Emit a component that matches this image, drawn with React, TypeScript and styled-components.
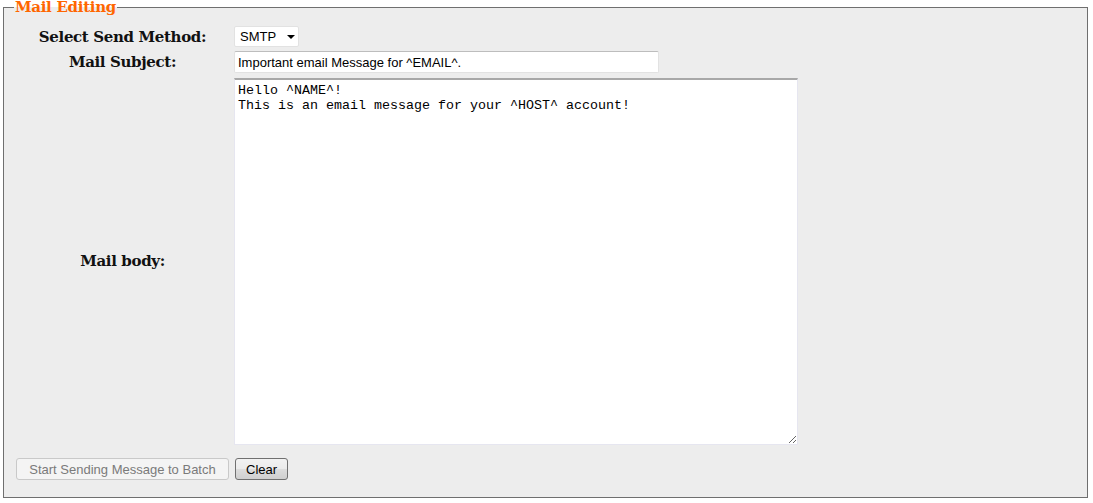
import React from "react";
import styled, { createGlobalStyle } from "styled-components";

const GlobalStyle = createGlobalStyle`
  html, body {
    margin: 0;
    padding: 0;
    background: #ffffff;
  }
`;

const Frame = styled.fieldset`
  margin: 0 5px 4px 3px;
  padding: 12px 12px 17px 12px;
  border: 1px solid #6f6f6f;
  background: #ededed;
  min-width: 0;
`;

const Legend = styled.legend`
  padding: 0 1px;
  margin-left: -2px;
  font-family: "DejaVu Serif", Georgia, serif;
  font-weight: bold;
  font-size: 15px;
  line-height: 14px;
  color: #ff6600;
  letter-spacing: -0.3px;
`;

const FormGrid = styled.div`
  display: grid;
  grid-template-columns: 213px auto;
  column-gap: 5px;
  row-gap: 4px;
  align-items: center;
  justify-items: start;
`;

const Label = styled.label`
  justify-self: center;
  font-family: "DejaVu Serif", Georgia, serif;
  font-weight: bold;
  font-size: 15px;
  color: #111;
  letter-spacing: -0.35px;
`;

const SelectBox = styled.div`
  display: flex;
  align-items: center;
  gap: 11px;
  box-sizing: border-box;
  width: 65px;
  height: 21px;
  padding: 0 5px 0 5px;
  background: #fff;
  border: 1px solid #e2e2e2;
  border-radius: 2px;
  font-family: "Liberation Sans", Arial, sans-serif;
  font-size: 13px;
  color: #000;
`;

const Caret = styled.span`
  width: 0;
  height: 0;
  border-left: 4px solid transparent;
  border-right: 4px solid transparent;
  border-top: 4px solid #000;
`;

const TextInput = styled.input`
  box-sizing: border-box;
  width: 425px;
  height: 22px;
  padding: 1px 3px;
  border: 1px solid #e2e2e2;
  border-top-color: #bdbdbd;
  border-radius: 2px;
  background: #fff;
  font-family: "Liberation Sans", Arial, sans-serif;
  font-size: 13px;
  color: #000;
  outline: none;
`;

const BodyArea = styled.textarea`
  box-sizing: border-box;
  width: 564px;
  height: 367px;
  margin-top: 1px;
  padding: 3px 3px;
  border: 1px solid #e6e6f0;
  border-top: 2px solid #a8a8a8;
  background: #fff;
  font-family: "Liberation Mono", "Courier New", monospace;
  font-size: 13.33px;
  line-height: 15px;
  color: #000;
  resize: both;
  outline: none;
`;

const ButtonRow = styled.div`
  display: flex;
  gap: 6px;
  margin-top: 13px;
`;

const Button = styled.button<{ $muted?: boolean }>`
  box-sizing: border-box;
  height: 22px;
  padding: 0 10px;
  font-family: "Liberation Sans", Arial, sans-serif;
  font-size: 13px;
  border-radius: 3px;
  color: ${(p) => (p.$muted ? "#7a7a7a" : "#000")};
  border: 1px solid ${(p) => (p.$muted ? "#c9c9c9" : "#707070")};
  background: ${(p) =>
    p.$muted
      ? "#f4f4f4"
      : "linear-gradient(#f2f2f2 0%, #ebebeb 50%, #dddddd 51%, #cfcfcf 100%)"};
`;

export default function App() {
  return (
    <>
      <GlobalStyle />
      <Frame>
        <Legend>Mail Editing</Legend>
        <FormGrid>
          <Label>Select Send Method:</Label>
          <SelectBox>
            SMTP <Caret />
          </SelectBox>
          <Label>Mail Subject:</Label>
          <TextInput defaultValue="Important email Message for ^EMAIL^." />
          <Label>Mail body:</Label>
          <BodyArea
            defaultValue={"Hello ^NAME^!\nThis is an email message for your ^HOST^ account!"}
          />
        </FormGrid>
        <ButtonRow>
          <Button $muted disabled style={{ width: 213 }}>
            Start Sending Message to Batch
          </Button>
          <Button>Clear</Button>
        </ButtonRow>
      </Frame>
    </>
  );
}
